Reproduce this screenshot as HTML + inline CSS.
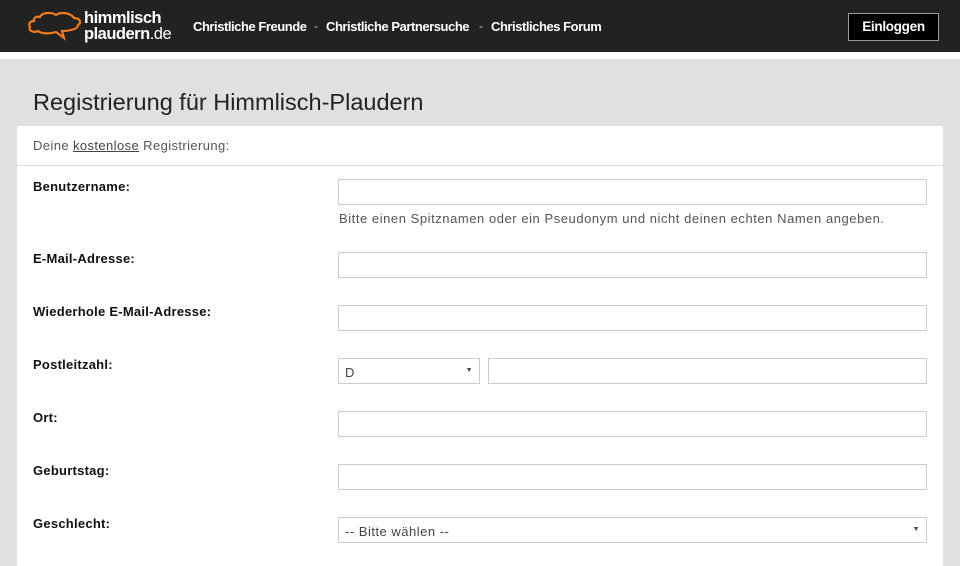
<!DOCTYPE html>
<html><head><meta charset="utf-8"><style>
*{box-sizing:border-box;margin:0;padding:0}
body{width:960px;height:561px;overflow:hidden;background:#e0e0e0;font-family:"Liberation Sans",sans-serif;position:relative}
.hdr{position:absolute;left:0;top:0;width:960px;height:52px;background:#222}
.strip{position:absolute;left:0;top:52px;width:960px;height:7px;background:#fff}
.logo{position:absolute;left:84px;top:10px;color:#fff;font-weight:bold;font-size:16.5px;line-height:16px;letter-spacing:-0.5px}
.nav{position:absolute;top:19px;color:#fff;font-weight:bold;font-size:13px;letter-spacing:-0.45px}
.sep{position:absolute;top:19px;color:#ccc;font-size:12px}
.btn{position:absolute;left:848px;top:13px;width:91px;height:28px;background:#000;border:1px solid #999;color:#fff;font-weight:bold;font-size:13.5px;letter-spacing:-0.3px;text-align:center;line-height:26px}
h1{position:absolute;left:33px;top:89px;font-weight:normal;font-size:23.5px;color:#222}
.card{position:absolute;left:17px;top:126px;width:926px;height:440px;background:#fff}
.sub{position:absolute;left:33px;top:138px;font-size:13px;color:#555;letter-spacing:0.4px}
.sub u{color:#444}
.line{position:absolute;left:17px;top:165px;width:926px;height:1px;background:#ddd}
.lbl{position:absolute;left:33px;font-weight:bold;font-size:13px;color:#111;letter-spacing:0.25px}
.in{position:absolute;left:338px;width:589px;height:26px;border:1px solid #ccc;background:#fff;font-size:13px;color:#444;padding:6px 6px;letter-spacing:0.5px}
.hint{position:absolute;left:339px;top:211px;font-size:13px;color:#555;letter-spacing:0.55px}
.arr{position:absolute;right:6px;top:8px;font-size:7px;color:#444}
</style></head><body>
<div class="hdr"></div><div class="strip"></div>
<svg style="position:absolute;left:26px;top:9px" width="58" height="32" viewBox="0 0 58 32"><path d="M8 12 C4 12 2 15 4 18 C2 22 8 24 12 22 C16 25 24 25 30 23 L38 29 L36 22 C44 22 52 20 52 16 C56 14 54 9 48 9 C44 3 34 3 30 6 C26 3 16 3 14 8 C10 7 7 9 8 12 Z" fill="none" stroke="#f07a1a" stroke-width="2.2"/></svg>
<div class="logo">himmlisch<br>plaudern<span style="font-weight:normal">.de</span></div>
<div class="nav" style="left:193px">Christliche Freunde</div>
<div class="sep" style="left:314px">-</div>
<div class="nav" style="left:326px">Christliche Partnersuche</div>
<div class="sep" style="left:479px">-</div>
<div class="nav" style="left:491px">Christliches Forum</div>
<div class="btn">Einloggen</div>
<h1>Registrierung für Himmlisch-Plaudern</h1>
<div class="card"></div>
<div class="sub">Deine <u>kostenlose</u> Registrierung:</div>
<div class="line"></div>
<div class="lbl" style="top:179px">Benutzername:</div>
<div class="in" style="top:179px"></div>
<div class="hint">Bitte einen Spitznamen oder ein Pseudonym und nicht deinen echten Namen angeben.</div>
<div class="lbl" style="top:251px">E-Mail-Adresse:</div>
<div class="in" style="top:252px"></div>
<div class="lbl" style="top:304px">Wiederhole E-Mail-Adresse:</div>
<div class="in" style="top:305px"></div>
<div class="lbl" style="top:357px">Postleitzahl:</div>
<div class="in" style="top:358px;width:142px">D<span class="arr">▼</span></div>
<div class="in" style="top:358px;left:488px;width:439px"></div>
<div class="lbl" style="top:410px">Ort:</div>
<div class="in" style="top:411px"></div>
<div class="lbl" style="top:463px">Geburtstag:</div>
<div class="in" style="top:464px"></div>
<div class="lbl" style="top:516px">Geschlecht:</div>
<div class="in" style="top:517px">-- Bitte wählen --<span class="arr">▼</span></div>
</body></html>
